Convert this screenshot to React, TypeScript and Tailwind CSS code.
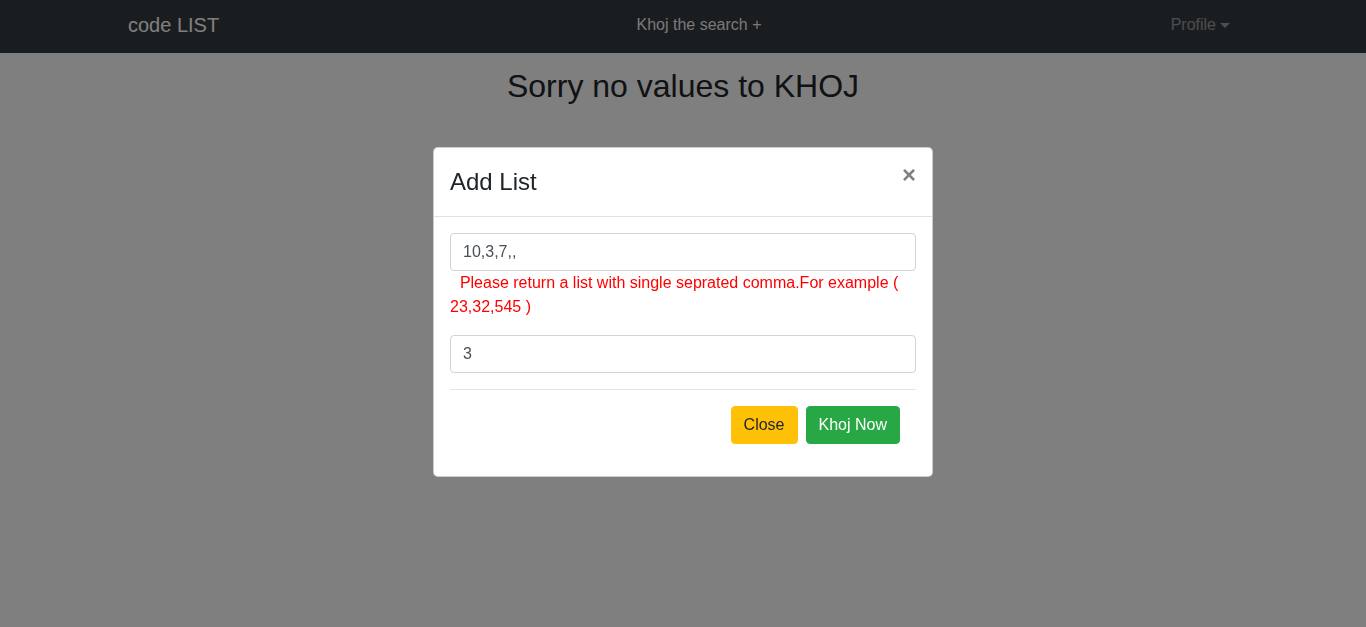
export default function App() {
  return (
    <div className="relative min-h-screen bg-white font-['Liberation_Sans',Arial,sans-serif] text-[#212529]">
      {/* navbar */}
      <nav className="h-[53px] bg-[#343a40]">
        <div className="mx-auto flex h-full max-w-[1140px] items-center px-[15px] pb-[3px]">
          <span className="flex-1 text-[20px] leading-[30px] text-white">code LIST</span>
          <a className="ml-[32px] px-2 text-[16px] leading-6 text-white/95">Khoj the search +</a>
          <div className="flex flex-1 justify-end">
            <a className="flex items-center px-2 text-[16px] leading-6 text-white/50">
              Profile
              <span className="ml-[4px] inline-block h-0 w-0 border-x-[5px] border-t-[5px] border-x-transparent border-t-white/50" />
            </a>
          </div>
        </div>
      </nav>

      <h2 className="mt-[14px] text-center text-[32px] leading-[38px]">Sorry no values to KHOJ</h2>

      {/* backdrop + modal */}
      <div className="fixed inset-0 bg-black/50">
        <div className="flex justify-center pt-[147px]">
          <div className="w-[500px] rounded-[5px] border border-black/20 bg-white">
            <div className="relative flex items-start justify-between border-b border-[#dee2e6] p-4">
              <h4 className="text-[24px] leading-[36px] text-[#212529]">Add List</h4>
              <button className="mt-[-7px] text-[24px] font-bold leading-[36px] text-black/50">×</button>
            </div>
            <div className="px-4 pt-4 pb-8">
              <div className="mb-4">
                <div className="h-[38px] rounded border border-[#ced4da] px-3 py-[6px] text-[16px] leading-6 text-[#495057]">10,3,7,,</div>
                <p className="text-[16px] leading-6 text-[#ff0000]">
                  &nbsp;&nbsp;<span className="pl-[1px]">Please return a list with single seprated comma.For example ( 23,32,545 )</span>
                </p>
              </div>
              <div className="h-[38px] rounded border border-[#ced4da] px-3 py-[6px] text-[16px] leading-6 text-[#495057]">3</div>
              <hr className="my-4 border-t border-black/10" />
              <div className="flex justify-end gap-2 pr-4">
                <button className="h-[38px] rounded border border-[#ffc107] bg-[#ffc107] px-3 text-[16px] leading-6 text-[#212529]">Close</button>
                <button className="h-[38px] rounded border border-[#28a745] bg-[#28a745] px-3 text-[16px] leading-6 text-white">Khoj Now</button>
              </div>
            </div>
          </div>
        </div>
      </div>
    </div>
  );
}
